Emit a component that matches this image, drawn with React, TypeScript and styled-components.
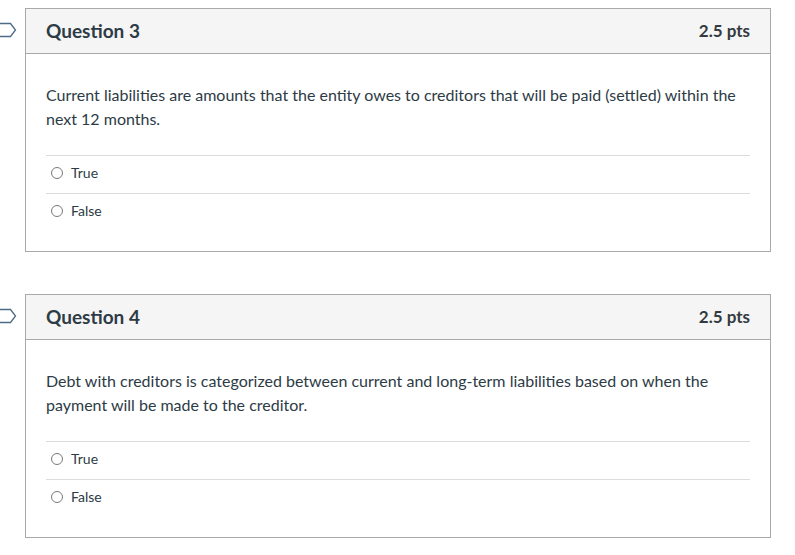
import styled, { createGlobalStyle } from 'styled-components';

const GlobalStyle = createGlobalStyle`
  html, body {
    margin: 0;
    padding: 0;
    background: #ffffff;
    font-family: Lato, "Noto Sans", sans-serif;
    color: #2d3b45;
  }
`;

const Page = styled.div`
  padding: 8px 24px 0 0;
  display: flex;
  flex-direction: column;
  gap: 42px;
`;

const QuestionRow = styled.div`
  display: flex;
  align-items: flex-start;
`;

const FlagCol = styled.div`
  width: 25px;
  flex-shrink: 0;
  padding-top: 14px;
`;

const Card = styled.div`
  flex: 1;
  border: 1px solid #a9a9a9;
  background: #fff;
`;

const Header = styled.div`
  height: 45px;
  box-sizing: border-box;
  background: #f5f5f5;
  border-bottom: 1px solid #a9a9a9;
  display: flex;
  align-items: center;
  justify-content: space-between;
  padding: 0 20px 2px 20px;
`;

const Title = styled.h2`
  margin: 0;
  font-size: 19px;
  font-weight: 700;
  color: #2d3b45;
`;

const Points = styled.div`
  font-size: 17px;
  font-weight: 700;
  color: #333a40;
`;

const Body = styled.div`
  padding: 29px 20px 20px 20px;
`;

const Text = styled.p`
  margin: 0 0 24px 0;
  font-size: 16px;
  line-height: 24px;
  color: #2d3b45;
`;

const Answer = styled.label`
  display: flex;
  align-items: center;
  gap: 8px;
  height: 38px;
  box-sizing: border-box;
  padding: 0 0 5px 5px;
  border-top: 1px solid #dcdcdc;
  font-size: 14px;
  color: #2d3b45;
`;

const Radio = styled.span`
  width: 12px;
  height: 12px;
  border: 1px solid #7a7a7a;
  border-radius: 50%;
  box-sizing: border-box;
  margin-top: 1px;
`;

const Flag = () => (
  <svg width="17" height="16" viewBox="0 0 17 16">
    <path d="M-4 1.5 H10.5 L15.5 8 L10.5 14.5 H-4" fill="none" stroke="#4d6b86" strokeWidth="1.3" />
  </svg>
);

type Q = { num: number; text: string };

const questions: Q[] = [
  {
    num: 3,
    text: 'Current liabilities are amounts that the entity owes to creditors that will be paid (settled) within the next 12 months.',
  },
  {
    num: 4,
    text: 'Debt with creditors is categorized between current and long-term liabilities based on when the payment will be made to the creditor.',
  },
];

const App = () => {
  return (
    <>
      <GlobalStyle />
      <Page>
        {questions.map((q) => (
          <QuestionRow key={q.num}>
            <FlagCol>
              <Flag />
            </FlagCol>
            <Card>
              <Header>
                <Title>Question {q.num}</Title>
                <Points>2.5 pts</Points>
              </Header>
              <Body>
                <Text>{q.text}</Text>
                <Answer>
                  <Radio />
                  True
                </Answer>
                <Answer>
                  <Radio />
                  False
                </Answer>
              </Body>
            </Card>
          </QuestionRow>
        ))}
      </Page>
    </>
  );
};

export default App;
